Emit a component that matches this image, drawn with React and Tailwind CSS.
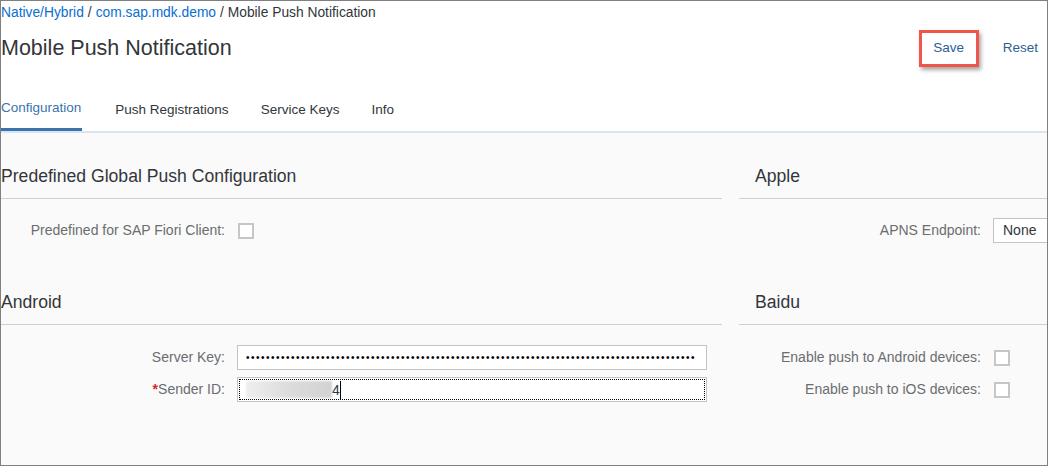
const Checkbox = () => (
  <span className="block w-4 h-4 border-2 border-[#c6c6c6] bg-white" />
);

const SectionTitle = ({ children, right }) => (
  <div
    className={`pt-[32px] pb-[11px] leading-[22px] text-[17.6px] text-[#32363a] border-b border-[#cfcfcf] ${
      right ? 'pl-[16px]' : ''
    }`}
  >
    {children}
  </div>
);

const LeftRow = ({ label, required, children }) => (
  <div className="flex items-center h-[25px]">
    <div className="w-[224px] text-right text-[14px] text-[#6a6d70] whitespace-nowrap">
      {required && <span className="text-[#d9262b] font-bold">*</span>}
      {label}
    </div>
    <div className="ml-[12px]">{children}</div>
  </div>
);

const RightRow = ({ label, children }) => (
  <div className="flex items-center h-[25px]">
    <div className="w-[242px] text-right text-[14px] text-[#6a6d70] whitespace-nowrap">{label}</div>
    <div className="ml-[12px]">{children}</div>
  </div>
);

export default function App() {
  const dots = '•'.repeat(90);

  return (
    <div className="w-[1048px] h-[466px] border border-[#808080] overflow-hidden flex flex-col font-['Liberation_Sans',Arial,sans-serif] bg-[#fafafa]">
      {/* header */}
      <div className="bg-white border-b-2 border-[#d9e6f2]">
        <div className="h-[25px] flex items-center text-[13.8px] whitespace-nowrap">
          <span className="text-[#0a6ed1]">Native/Hybrid</span>
          <span className="text-[#32363a] px-[4px]">/</span>
          <span className="text-[#0a6ed1]">com.sap.mdk.demo</span>
          <span className="text-[#32363a] pl-[4px]">/ Mobile Push Notification</span>
        </div>
        <div className="h-[45px] flex items-center justify-between">
          <h1 className="text-[21.5px] text-[#32363a] leading-none">Mobile Push Notification</h1>
          <div className="flex items-center pr-[9px]">
            <div className="w-[60px] h-[37px] border-[3px] border-[#ef5648] bg-white shadow-[2px_3px_4px_rgba(0,0,0,0.35)] flex items-center justify-center text-[13.5px] text-[#2c5f93]">
              Save
            </div>
            <div className="ml-[24px] text-[13.5px] text-[#2c5f93]">Reset</div>
          </div>
        </div>
        <div className="mt-[18px] flex text-[13.5px] text-[#32363a]">
          <div className="h-[42px] flex items-center border-b-[3px] border-[#3a74ad] text-[#3a74ad] -mb-[2px] pr-[1px]">
            Configuration
          </div>
          <div className="h-[42px] flex items-center ml-[33px]">Push Registrations</div>
          <div className="h-[42px] flex items-center ml-[32px]">Service Keys</div>
          <div className="h-[42px] flex items-center ml-[32px]">Info</div>
        </div>
      </div>

      {/* content */}
      <div className="flex-1 grid grid-cols-[721px_1fr] gap-x-[17px]">
        <div>
          <SectionTitle>Predefined Global Push Configuration</SectionTitle>
          <div className="pt-[19px]">
            <LeftRow label="Predefined for SAP Fiori Client:">
              <div className="ml-[1px]">
                <Checkbox />
              </div>
            </LeftRow>
          </div>
          <div className="pt-[16px]">
            <SectionTitle>Android</SectionTitle>
          </div>
          <div className="pt-[20px] flex flex-col gap-[7px]">
            <LeftRow label="Server Key:">
              <div className="w-[470px] h-[25px] border border-[#c4c4c4] bg-white flex items-center pl-[8px] overflow-hidden">
                <span className="text-[10px] tracking-[1.5px] text-black leading-none whitespace-nowrap">{dots}</span>
              </div>
            </LeftRow>
            <LeftRow label="Sender ID:" required>
              <div className="w-[470px] h-[25px] border border-[#c4c4c4] bg-white p-[1px]">
                <div className="h-full border border-dotted border-black flex items-center pl-[6px]">
                  <div className="w-[86px] h-[17px] bg-gradient-to-r from-[#efefef] via-[#dcdcdc] to-[#d2d2d2] blur-[1px]" />
                  <span className="text-[14px] text-[#32363a] leading-none">4</span>
                  <span className="w-px h-[18px] bg-black" />
                </div>
              </div>
            </LeftRow>
          </div>
        </div>

        <div>
          <SectionTitle right>Apple</SectionTitle>
          <div className="pt-[19px]">
            <RightRow label="APNS Endpoint:">
              <div className="w-[70px] h-[25px] border border-[#c4c4c4] bg-white flex items-center pl-[9px] text-[14px] text-[#32363a]">
                None
              </div>
            </RightRow>
          </div>
          <div className="pt-[16px]">
            <SectionTitle right>Baidu</SectionTitle>
          </div>
          <div className="pt-[20px] flex flex-col gap-[7px]">
            <RightRow label="Enable push to Android devices:">
              <div className="ml-[1px]">
                <Checkbox />
              </div>
            </RightRow>
            <RightRow label="Enable push to iOS devices:">
              <div className="ml-[1px]">
                <Checkbox />
              </div>
            </RightRow>
          </div>
        </div>
      </div>
    </div>
  );
}
